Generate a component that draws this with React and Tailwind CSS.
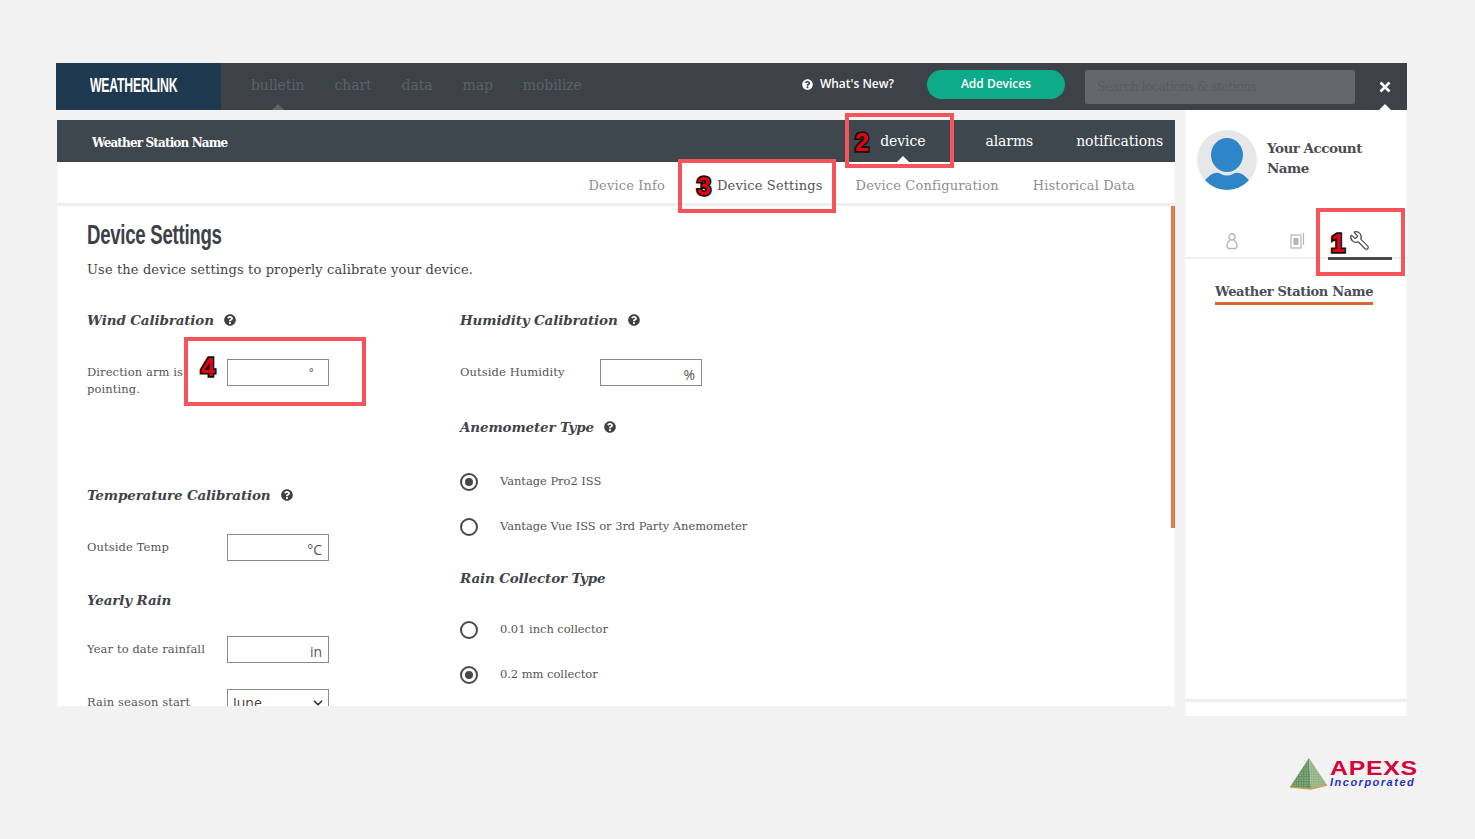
import { ChevronDown, Wrench } from "lucide-react";
import { FaQuestionCircle } from "react-icons/fa";

const serif = "font-['DejaVu_Serif',serif]";

function SectionTitle({ children, help, className = "" }) {
  return (
    <div className={`flex items-center h-5 ${className}`}>
      <h3 className="text-[13.5px] font-bold italic text-[#3f4449] tracking-[-0.15px]">{children}</h3>
      {help && <FaQuestionCircle className="ml-[10px] w-3 h-3 text-[#3c4248]" />}
    </div>
  );
}

function UnitInput({ unit, sans }) {
  return (
    <div className="w-[102px] h-[27px] border border-[#8a8a8a] bg-white flex items-center justify-end pr-[6px] shrink-0">
      <span className={`mt-[3px] text-[#555] ${sans ? "font-['Open_Sans',sans-serif] text-[14px]" : "text-[11px] pr-[8px]"}`}>{unit}</span>
    </div>
  );
}

function FieldRow({ label, unit, sans, className = "" }) {
  return (
    <div className={`flex items-center ${className}`}>
      <span className="w-[140px] text-[11.5px] leading-[17px] text-[#555] tracking-[0.1px]">{label}</span>
      <UnitInput unit={unit} sans={sans} />
    </div>
  );
}

function Radio({ label, checked, className = "" }) {
  return (
    <label className={`flex items-center h-5 ${className}`}>
      <span className="w-[18px] h-[18px] rounded-full border-2 border-[#45494e] flex items-center justify-center mr-[22px] bg-white">
        {checked && <span className="w-[8px] h-[8px] rounded-full bg-[#45494e]" />}
      </span>
      <span className="text-[11.5px] text-[#555] tracking-[-0.05px]">{label}</span>
    </label>
  );
}

function Callout({ className }) {
  return <div className={`absolute border-[4px] border-[#f7535a] pointer-events-none ${className}`} />;
}

function Digit({ children, className }) {
  return (
    <span className={`absolute font-['Liberation_Sans',sans-serif] font-bold text-[25px] leading-none text-[#e8000f] [-webkit-text-stroke:3.5px_#111] [paint-order:stroke_fill] ${className}`}>
      {children}
    </span>
  );
}

function ApexsLogo() {
  return (
    <div className="flex items-start">
      <svg width="40" height="34" viewBox="0 0 40 34">
        <defs>
          <pattern id="dots" width="2.5" height="2.5" patternUnits="userSpaceOnUse">
            <circle cx="1" cy="1" r="0.7" fill="#d8e4cf" />
          </pattern>
        </defs>
        <polygon points="20,1 1,30 22,32" fill="#5d8f5c" />
        <polygon points="20,1 38,28 22,32" fill="#90b183" />
        <polygon points="20,1 1,30 22,32 38,28" fill="url(#dots)" opacity="0.55" />
        <path d="M1 30 L22 32 L38 28" fill="none" stroke="#c9a15a" strokeWidth="1.5" />
      </svg>
      <div className="ml-[1px] mt-[2px] flex flex-col items-start font-['Liberation_Sans',sans-serif]">
        <span className="inline-block origin-left scale-x-[1.24] text-[20px] leading-[18px] font-bold text-[#d5033c] tracking-[0.6px]">APEXS</span>
        <span className="text-[11px] leading-[11px] font-bold italic text-[#2433c4] tracking-[1.5px]">Incorporated</span>
      </div>
    </div>
  );
}

export default function App() {
  return (
    <div className={`relative h-[839px] bg-[#f2f2f2] pt-[63px] pl-[56px] overflow-hidden ${serif}`}>
      {/* Top bar */}
      <header className="w-[1351px] h-[47px] bg-[#3c4248] flex items-center">
        <div className="w-[165px] h-full bg-[#1f3a50] flex items-center pl-[34px] pb-[4px]">
          <span className="inline-block origin-left scale-x-[0.585] font-['Liberation_Sans',sans-serif] font-bold text-[21px] text-white tracking-[-0.4px]">WEATHERLINK</span>
        </div>
        <nav className="relative h-full flex items-center gap-[30px] pl-[30px] text-[14px] text-[#5b6268] tracking-[-0.1px]">
          <span className="relative h-full flex items-center pb-[2px]">
            bulletin
            <span className="absolute bottom-0 left-1/2 -ml-[6px] border-x-[6px] border-x-transparent border-b-[6px] border-b-[#5f6569]" />
          </span>
          <span className="pb-[2px]">chart</span>
          <span className="pb-[2px]">data</span>
          <span className="pb-[2px]">map</span>
          <span className="pb-[2px]">mobilize</span>
        </nav>
        <div className="ml-auto h-full flex items-center font-['Open_Sans',sans-serif]">
          <FaQuestionCircle className="w-[11px] h-[11px] text-white mb-[5px]" />
          <span className="ml-[7px] mb-[5px] text-[12px] font-semibold text-white">What's New?</span>
          <button className="ml-[33px] mb-[5px] w-[138px] h-[29px] rounded-full bg-[#0dab8a] text-white text-[12px] font-semibold">Add Devices</button>
          <div className="ml-[20px] mt-[1px] w-[270px] h-[34px] rounded-[2px] bg-[#62676d] flex items-center pl-[12px] text-[12.5px] text-[#565b61] font-['DejaVu_Serif',serif] tracking-[-0.55px]">
            Search locations &amp; stations
          </div>
          <div className="relative ml-[8px] w-[44px] h-full flex items-center justify-center">
            <svg width="12" height="12" viewBox="0 0 12 12">
              <path d="M1.5 1.5 L10.5 10.5 M10.5 1.5 L1.5 10.5" stroke="#fff" strokeWidth="2.6" />
            </svg>
            <span className="absolute bottom-0 left-1/2 -ml-[6px] border-x-[6px] border-x-transparent border-b-[6px] border-b-white" />
          </div>
        </div>
      </header>

      <div className="flex w-[1351px]">
        {/* Main panel */}
        <main className="ml-[1px] mt-[10px] w-[1118px] h-[586px] bg-white overflow-hidden flex flex-col">
          <div className="h-[42px] bg-[#3e474d] shrink-0 flex items-center pl-[35px] pr-[12px] text-white">
            <span className="pt-[3px] text-[12px] font-bold tracking-[-0.85px]">Weather Station Name</span>
            <div className="ml-auto h-full flex items-center text-[14px] tracking-[-0.1px]">
              <span className="relative h-full flex items-center">
                device
                <span className="absolute bottom-0 left-1/2 -ml-[6px] border-x-[6px] border-x-transparent border-b-[6px] border-b-white" />
              </span>
              <span className="ml-[60px]">alarms</span>
              <span className="ml-[43px]">notifications</span>
            </div>
          </div>
          <div className="h-[44px] shrink-0 border-b-[3px] border-[#efefef] flex items-center justify-end pt-[7px] pr-[40px] text-[13px] text-[#8f8f8f] tracking-[0.15px]">
            <span>Device Info</span>
            <span className="ml-[52px] text-[#555]">Device Settings</span>
            <span className="ml-[33px]">Device Configuration</span>
            <span className="ml-[34px]">Historical Data</span>
          </div>

          <div className="relative flex-1 pl-[30px]">
            <span className="absolute right-0 top-0 w-[4px] h-[322px] bg-[#e8784a]" />
            <h1 className="mt-[11px] font-['Liberation_Sans',sans-serif] font-bold text-[27px] leading-[36px] text-[#3c4248] tracking-[-0.4px]">
              <span className="inline-block origin-left scale-x-[0.69]">Device Settings</span>
            </h1>
            <p className="mt-[7px] text-[13px] leading-[20px] text-[#444] tracking-[0.13px]">Use the device settings to properly calibrate your device.</p>

            <div className="flex mt-[30px]">
              <div className="w-[373px]">
                <SectionTitle help>Wind Calibration</SectionTitle>
                <div className="flex items-start mt-[29px]">
                  <span className="w-[140px] pt-[5px] pr-[40px] text-[11.5px] leading-[17px] text-[#555] tracking-[0.1px]">Direction arm is pointing.</span>
                  <UnitInput unit="°" />
                </div>
                <SectionTitle help className="mt-[87px]">Temperature Calibration</SectionTitle>
                <FieldRow label="Outside Temp" unit="°C" sans className="mt-[29px]" />
                <SectionTitle className="mt-[29px]">Yearly Rain</SectionTitle>
                <FieldRow label="Year to date rainfall" unit="in" sans className="mt-[26px]" />
                <div className="flex items-center mt-[26px]">
                  <span className="w-[140px] text-[11.5px] text-[#555] tracking-[0.1px]">Rain season start</span>
                  <div className="w-[102px] h-[27px] border border-[#8a8a8a] flex items-center justify-between pl-[5px] pr-[3px] text-[14px] text-[#444] font-['Open_Sans',sans-serif] shrink-0">
                    June
                    <ChevronDown className="w-[14px] h-[14px] text-[#333]" strokeWidth={3} />
                  </div>
                </div>
              </div>

              <div>
                <SectionTitle help>Humidity Calibration</SectionTitle>
                <FieldRow label="Outside Humidity" unit="%" sans className="mt-[29px]" />
                <SectionTitle help className="mt-[31px]">Anemometer Type</SectionTitle>
                <Radio checked label="Vantage Pro2 ISS" className="mt-[35px]" />
                <Radio label="Vantage Vue ISS or 3rd Party Anemometer" className="mt-[25px]" />
                <SectionTitle className="mt-[31px]">Rain Collector Type</SectionTitle>
                <Radio label="0.01 inch collector" className="mt-[32px]" />
                <Radio checked label="0.2 mm collector" className="mt-[25px]" />
              </div>
            </div>
          </div>
        </main>

        {/* Account sidebar */}
        <aside className="ml-[10px] w-[222px] h-[606px] bg-white flex flex-col">
          <div className="flex items-center pl-[12px] pt-[20px]">
            <div className="w-[60px] h-[60px] rounded-full bg-[#e6e7e8] overflow-hidden shrink-0">
              <svg width="60" height="60" viewBox="0 0 60 60">
                <ellipse cx="30" cy="25" rx="16" ry="17" fill="#2e86c8" />
                <path d="M8 50 C14 43 20 41 24 44 C28 46 32 46 36 44 C40 41 46 43 52 50 C46 57 38 60 30 60 C22 60 14 57 8 50 Z" fill="#2e86c8" />
              </svg>
            </div>
            <span className="ml-[10px] -mt-[4px] w-[110px] text-[13.5px] leading-[20px] font-bold text-[#4a4e53] tracking-[-0.5px]">Your Account Name</span>
          </div>
          <div className="mt-[31px] h-[38px] border-b-[2px] border-[#efefef] flex items-start pl-[41px]">
            <svg width="12" height="18" viewBox="0 0 12 18" className="mt-[11px]" fill="none" stroke="#b5b5b5" strokeWidth="1.3">
              <circle cx="6" cy="5" r="3" />
              <path d="M4 8 C1.5 10 1 12 1 14 C1 16 2 16.5 3.5 16.5 H8.5 C10 16.5 11 16 11 14 C11 12 10.5 10 8 8" />
            </svg>
            <svg width="16" height="18" viewBox="0 0 16 18" className="ml-[52px] mt-[11px]" fill="none">
              <rect x="1" y="3" width="10" height="13" stroke="#b5b5b5" strokeWidth="1.2" />
              <rect x="3.5" y="6" width="5" height="7" fill="#b5b5b5" />
              <path d="M13.5 1 V13" stroke="#b5b5b5" strokeWidth="1.2" />
            </svg>
            <div className="ml-[22px] w-[64px] h-[39px] border-b-[3px] border-[#45494e] flex justify-end pr-[22px] pt-[9px]">
              <Wrench className="w-[21px] h-[21px] text-[#4a4e53] -scale-x-100" strokeWidth={1.4} />
            </div>
          </div>
          <div className="mt-[23px] ml-[30px] self-start border-b-[3px] border-[#d96436] text-[13px] leading-[20px] font-bold text-[#4a4e53] tracking-[-0.35px]">
            Weather Station Name
          </div>
          <div className="mt-auto mb-[14px] h-[3px] bg-[#efefef]" />
        </aside>
      </div>

      <div className="absolute left-[1289px] top-[757px]">
        <ApexsLogo />
      </div>

      {/* Tutorial callouts */}
      <Callout className="left-[1316px] top-[208px] w-[89px] h-[68px]" />
      <Callout className="left-[845px] top-[113px] w-[109px] h-[55px]" />
      <Callout className="left-[678px] top-[159px] w-[158px] h-[54px]" />
      <Callout className="left-[184px] top-[337px] w-[182px] h-[69px]" />
      <Digit className="left-[1331px] top-[231px]">1</Digit>
      <Digit className="left-[855px] top-[130px]">2</Digit>
      <Digit className="left-[697px] top-[174px]">3</Digit>
      <Digit className="left-[201px] top-[355px]">4</Digit>
    </div>
  );
}
